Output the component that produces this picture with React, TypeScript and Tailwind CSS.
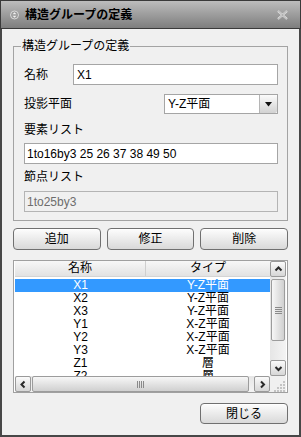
import { type FC, type ReactNode } from "react";

const rows = [
  { name: "X1", type: "Y-Z平面" },
  { name: "X2", type: "Y-Z平面" },
  { name: "X3", type: "Y-Z平面" },
  { name: "Y1", type: "X-Z平面" },
  { name: "Y2", type: "X-Z平面" },
  { name: "Y3", type: "X-Z平面" },
  { name: "Z1", type: "層" },
  { name: "Z2", type: "層" },
];

const Btn: FC<{ children: ReactNode; className?: string }> = ({ children, className }) => (
  <div
    className={
      "flex items-center justify-center rounded-[4px] border border-[#707070] bg-linear-to-b from-[#fdfdfd] to-[#d9d9d9] shadow-[inset_0_1px_0_#fff] " +
      (className ?? "")
    }
  >
    {children}
  </div>
);

const Chevron: FC<{ dir: "up" | "down" | "left" | "right" }> = ({ dir }) => {
  const pts = {
    up: "1.5,5.5 4.5,2.5 7.5,5.5",
    down: "1.5,3 4.5,6 7.5,3",
    left: "5.5,1.5 2.5,4.5 5.5,7.5",
    right: "3,1.5 6,4.5 3,7.5",
  }[dir];
  return (
    <svg width="9" height="9" viewBox="0 0 9 9">
      <polyline points={pts} fill="none" stroke="#2a2a2a" strokeWidth="2" />
    </svg>
  );
};

const ScrollBtn: FC<{ dir: "up" | "down" | "left" | "right" }> = ({ dir }) => (
  <div className="flex h-[16px] w-[16px] shrink-0 items-center justify-center rounded-[2px] border border-[#9a9a9a] bg-linear-to-b from-[#fbfbfb] to-[#d6d6d6]">
    <Chevron dir={dir} />
  </div>
);

export default function App() {
  return (
    <div className="flex h-[437px] w-[301px] flex-col font-['Liberation_Sans','Noto_Sans_CJK_JP',sans-serif] text-[12px] text-black">
      {/* title bar */}
      <div className="flex h-[29px] shrink-0 items-center border border-[#3a3a3a] bg-linear-to-b from-[#bdbdbd] to-[#7e7e7e] pl-[9px] pr-[12px]">
        <svg width="9" height="10" viewBox="0 0 9 10">
          <circle cx="4.5" cy="5" r="4" fill="#9a9a9a" stroke="#d8d8d8" strokeWidth="1" />
          <polygon points="2.5,4.2 4.5,2.2 6.5,4.2" fill="#f2f2f2" />
          <polygon points="2.5,5.8 4.5,7.8 6.5,5.8" fill="#f2f2f2" />
        </svg>
        <span className="ml-[6px] flex-1 text-[12px] font-bold leading-[16px] text-black">
          構造グループの定義
        </span>
        <svg width="11" height="10" viewBox="0 0 11 10">
          <path d="M1 1 L10 9 M10 1 L1 9" stroke="#e4e4e4" strokeWidth="2.2" />
          <path d="M1.5 1 L9.5 9 M9.5 1 L1.5 9" stroke="#8c8c8c" strokeWidth="0.7" />
        </svg>
      </div>

      {/* body */}
      <div className="flex flex-1 flex-col border-x-2 border-b-2 border-[#474747] bg-[#f0f0f0] px-[11px] pt-[9px]">
        <fieldset className="border border-[#a3a3a3] p-0">
          <legend className="ml-[7px] px-[1px] leading-[16px]">構造グループの定義</legend>
          <div className="flex flex-col pb-[8px] pl-[10px] pr-[9px]">
            <div className="mt-[10px] flex h-[21px] items-center">
              <span className="w-[49px]">名称</span>
              <div className="flex h-full flex-1 items-center border border-[#a5a5a5] bg-white pl-[3px]">X1</div>
            </div>
            <div className="mt-[9px] flex h-[20px] items-center justify-between">
              <span>投影平面</span>
              <div className="flex h-full w-[114px] border border-[#a5a5a5] bg-white">
                <span className="flex flex-1 items-center pl-[3px]">Y-Z平面</span>
                <div className="flex w-[18px] items-center justify-center rounded-r-[2px] border-l border-[#b5b5b5] bg-linear-to-b from-[#fbfbfb] to-[#d2d2d2]">
                  <svg width="7" height="5" viewBox="0 0 7 5">
                    <polygon points="0,0 7,0 3.5,4.5" fill="#111" />
                  </svg>
                </div>
              </div>
            </div>
            <span className="mt-[8px] leading-[16px]">要素リスト</span>
            <div className="mt-[5px] flex h-[21px] items-center border border-[#a5a5a5] bg-white pl-[2px]">
              1to16by3 25 26 37 38 49 50
            </div>
            <span className="mt-[5px] leading-[16px]">節点リスト</span>
            <div className="mt-[6px] flex h-[21px] items-center border border-[#b4b4b4] bg-[#f0f0f0] pl-[2px] text-[#6d6d6d]">
              1to25by3
            </div>
          </div>
        </fieldset>

        <div className="mt-[7px] grid h-[22px] grid-cols-3 gap-[6px]">
          <Btn>追加</Btn>
          <Btn>修正</Btn>
          <Btn>削除</Btn>
        </div>

        {/* list */}
        <div className="mt-[10px] flex h-[133px] flex-col border border-[#a0a0a0] bg-white px-[1px]">
          <div className="flex h-[115px]">
            <div className="flex w-[255px] flex-col">
              <div className="flex h-[16px] shrink-0 border-b border-[#d4d4d4] bg-linear-to-b from-[#f8f8f8] to-[#e2e2e2] leading-[15px]">
                <div className="w-[131px] border-r border-[#cfcfcf] text-center">名称</div>
                <div className="flex-1 text-center">タイプ</div>
              </div>
              <div className="mt-[2px] flex-1 overflow-hidden">
                {rows.map((r, i) => (
                  <div
                    key={r.name}
                    className={"flex h-[13px] leading-[13px] " + (i === 0 ? "bg-[#3399ff] text-white" : "")}
                  >
                    <div className="w-[131px] text-center">{r.name}</div>
                    <div className="flex-1 text-center">{r.type}</div>
                  </div>
                ))}
              </div>
            </div>
            <div className="flex w-[16px] flex-col bg-linear-to-r from-[#e6e6e6] to-[#f4f4f4]">
              <ScrollBtn dir="up" />
              <div className="flex-1 pt-[2px]">
                <div className="mx-[1px] flex h-[62px] items-center justify-center rounded-[2px] border border-[#9c9c9c] bg-linear-to-r from-[#f7f7f7] to-[#d0d0d0]">
                  <svg width="7" height="7" viewBox="0 0 7 7">
                    <path d="M0 0.5 H7 M0 2.5 H7 M0 4.5 H7 M0 6.5 H7" stroke="#8a8a8a" strokeWidth="1" />
                  </svg>
                </div>
              </div>
              <ScrollBtn dir="down" />
            </div>
          </div>
          <div className="flex h-[16px]">
            <div className="flex w-[255px] bg-linear-to-b from-[#e6e6e6] to-[#f4f4f4]">
              <ScrollBtn dir="left" />
              <div className="mx-[1px] flex flex-1 items-center justify-center rounded-[2px] border border-[#9c9c9c] bg-linear-to-b from-[#f7f7f7] to-[#d0d0d0] mr-[5px]">
                <svg width="7" height="7" viewBox="0 0 7 7">
                  <path d="M0.5 0 V7 M2.5 0 V7 M4.5 0 V7 M6.5 0 V7" stroke="#8a8a8a" strokeWidth="1" />
                </svg>
              </div>
              <ScrollBtn dir="right" />
            </div>
            <div className="flex w-[16px] items-end justify-end bg-[#f0f0f0]">
              <svg width="12" height="12" viewBox="0 0 12 12">
                <g fill="#c4c4c4">
                  <rect x="9" y="1" width="2" height="2" />
                  <rect x="6" y="4" width="2" height="2" />
                  <rect x="9" y="4" width="2" height="2" />
                  <rect x="3" y="7" width="2" height="2" />
                  <rect x="6" y="7" width="2" height="2" />
                  <rect x="9" y="7" width="2" height="2" />
                  <rect x="0" y="10" width="2" height="2" />
                  <rect x="3" y="10" width="2" height="2" />
                  <rect x="6" y="10" width="2" height="2" />
                  <rect x="9" y="10" width="2" height="2" />
                </g>
              </svg>
            </div>
          </div>
        </div>

        <div className="mt-[10px] flex justify-end">
          <Btn className="h-[21px] w-[88px]">閉じる</Btn>
        </div>
      </div>
    </div>
  );
}
